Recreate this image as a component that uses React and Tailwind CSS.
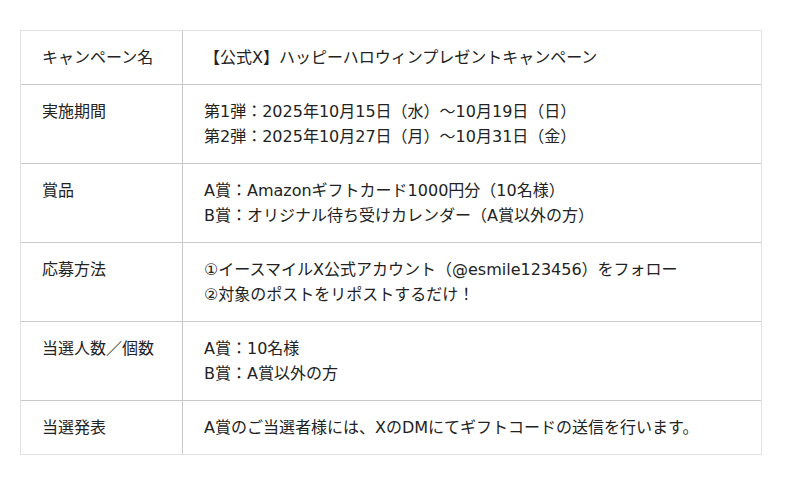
import React from 'react';

const rows = [
  { label: 'キャンペーン名', lines: ['【公式X】ハッピーハロウィンプレゼントキャンペーン'] },
  {
    label: '実施期間',
    lines: ['第1弾：2025年10月15日（水）～10月19日（日）', '第2弾：2025年10月27日（月）～10月31日（金）'],
  },
  {
    label: '賞品',
    lines: ['A賞：Amazonギフトカード1000円分（10名様）', 'B賞：オリジナル待ち受けカレンダー（A賞以外の方）'],
  },
  {
    label: '応募方法',
    lines: ['①イースマイルX公式アカウント（@esmile123456）をフォロー', '②対象のポストをリポストするだけ！'],
  },
  { label: '当選人数／個数', lines: ['A賞：10名様', 'B賞：A賞以外の方'] },
  { label: '当選発表', lines: ['A賞のご当選者様には、XのDMにてギフトコードの送信を行います。'] },
];

export default function App() {
  return (
    <div className="w-[800px] h-[485px] bg-white pt-[30px] px-5 text-[16px] leading-[25px] text-[#222] font-['DejaVu_Sans','Noto_Sans_CJK_JP',sans-serif]">
      <div className="w-[742px] border border-[#e2e2e2]">
        {rows.map((row, i) => (
          <div key={row.label} className={`flex ${i > 0 ? 'border-t border-[#c9c9c9]' : ''}`}>
            <div className="w-[162px] shrink-0 border-r border-[#c9c9c9] px-[21px] py-[14px]">{row.label}</div>
            <div className="flex-1 px-[21px] py-[14px]">
              {row.lines.map((line) => (
                <div key={line}>{line}</div>
              ))}
            </div>
          </div>
        ))}
      </div>
    </div>
  );
}
